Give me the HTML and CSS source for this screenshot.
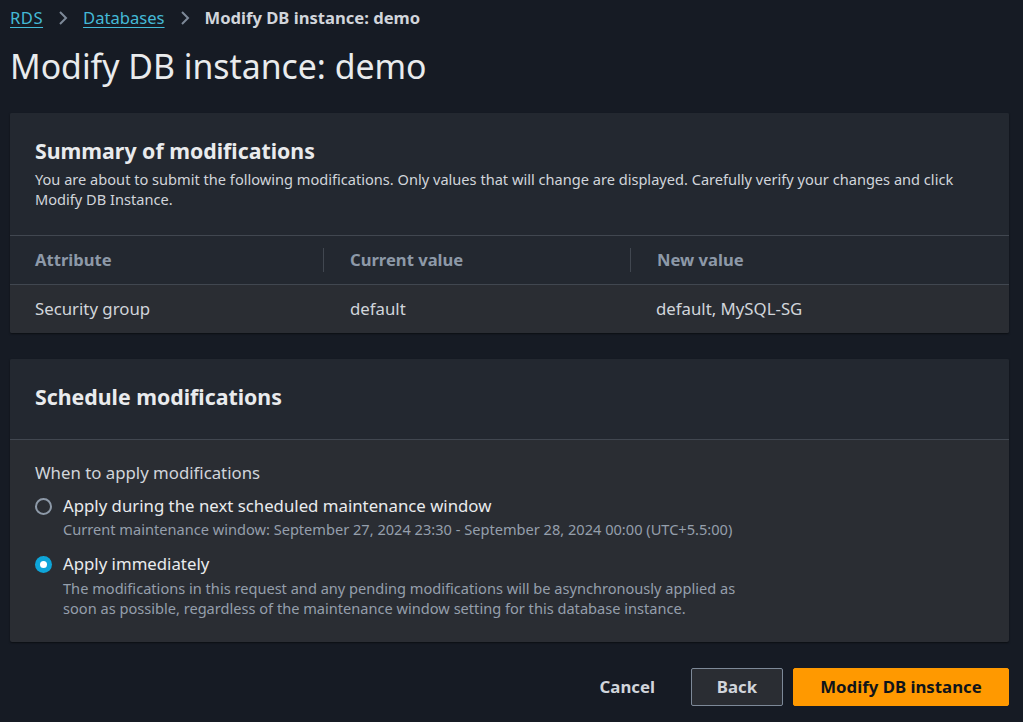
FILE: index.html
```html
<!DOCTYPE html>
<html lang="en">
<head>
<meta charset="utf-8">
<title>Modify DB instance: demo</title>
<link rel="stylesheet" href="styles.css">
</head>
<body>
<div class="page">
  <nav class="crumbs">
    <a class="crumb-link" href="#">RDS</a>
    <svg class="chev" width="10" height="16" viewBox="0 0 10 16"><path d="M2 2l6 6-6 6" fill="none" stroke="currentColor" stroke-width="2"/></svg>
    <a class="crumb-link" href="#">Databases</a>
    <svg class="chev" width="10" height="16" viewBox="0 0 10 16"><path d="M2 2l6 6-6 6" fill="none" stroke="currentColor" stroke-width="2"/></svg>
    <span class="crumb-current">Modify DB instance: demo</span>
  </nav>
  <h1 class="page-title">Modify DB instance: demo</h1>

  <section class="card">
    <div class="card-head">
      <h2 class="card-title">Summary of modifications</h2>
      <p class="card-desc">You are about to submit the following modifications. Only values that will change are displayed. Carefully verify your changes and click Modify DB Instance.</p>
    </div>
    <div class="table">
      <div class="row row-head">
        <div class="cell first">Attribute</div>
        <div class="cell sep">Current value</div>
        <div class="cell sep">New value</div>
      </div>
      <div class="row row-body">
        <div class="cell first">Security group</div>
        <div class="cell">default</div>
        <div class="cell">default, MySQL-SG</div>
      </div>
    </div>
  </section>

  <section class="card">
    <div class="card-head head-simple">
      <h2 class="card-title">Schedule modifications</h2>
    </div>
    <div class="card-body">
      <div class="field-label">When to apply modifications</div>
      <div class="radio">
        <span class="radio-dot"></span>
        <div class="radio-text">
          <div class="radio-label">Apply during the next scheduled maintenance window</div>
          <div class="radio-desc">Current maintenance window: September 27, 2024 23:30 - September 28, 2024 00:00 (UTC+5.5:00)</div>
        </div>
      </div>
      <div class="radio">
        <span class="radio-dot checked"></span>
        <div class="radio-text">
          <div class="radio-label">Apply immediately</div>
          <div class="radio-desc narrow">The modifications in this request and any pending modifications will be asynchronously applied as soon as possible, regardless of the maintenance window setting for this database instance.</div>
        </div>
      </div>
    </div>
  </section>

  <div class="actions">
    <button class="btn btn-link">Cancel</button>
    <button class="btn btn-normal">Back</button>
    <button class="btn btn-primary">Modify DB instance</button>
  </div>
</div>
</body>
</html>
```

FILE: styles.css
```css
* { box-sizing: border-box; }
html, body { margin: 0; padding: 0; }
body {
  background: #161b24;
  font-family: "Noto Sans", "Open Sans", Arial, sans-serif;
  color: #d1d5db;
  width: 1023px;
  height: 722px;
  overflow: hidden;
}
.page {
  padding: 6px 14px 0 10px;
}
.crumbs {
  display: flex;
  align-items: center;
  height: 24px;
  font-size: 16.6px;
  line-height: 24px;
}
.crumb-link {
  color: #44b9d6;
  text-decoration: underline;
  text-underline-offset: 3px;
  text-decoration-thickness: 1px;
}
.crumb-link:first-child { letter-spacing: 0.5px; }
.chev {
  color: #7d8998;
  margin: 0 15px 0 15px;
}
.crumb-current {
  font-weight: 700;
  color: #d1d5db;
}
.page-title {
  margin: 14px 0 0 0;
  font-size: 33.8px;
  line-height: 44px;
  font-weight: 400;
  color: #e9ebed;
}
.card {
  margin-top: 25px;
  background: #2a2d33;
  border-radius: 2px;
  box-shadow: 0 1px 2px rgba(0,0,0,0.5);
  overflow: hidden;
}
.card + .card { margin-top: 26px; }
.card-head {
  background: #232830;
  padding: 26px 25px 26px;
  border-bottom: 1px solid #414750;
}
.head-simple {
  padding: 26px 25px 30px;
}
.card-title {
  margin: 0;
  font-size: 21.3px;
  line-height: 24px;
  font-weight: 700;
  color: #e9ebed;
}
.card-desc {
  margin: 6px 0 0 0;
  font-size: 14.6px;
  line-height: 20px;
  color: #d1d5db;
}
.row {
  display: grid;
  grid-template-columns: 313px 307px 1fr;
  height: 48px;
  align-items: center;
}
.row-head {
  background: #232830;
  border-bottom: 1px solid #414750;
  font-weight: 700;
  color: #8d99a8;
  font-size: 16.6px;
  height: 49px;
}
.row-body {
  background: #2a2d33;
  font-size: 16.8px;
  color: #d1d5db;
}
.cell {
  padding-left: 27px;
  line-height: 24px;
}
.cell.first { padding-left: 25px; }
.cell.sep {
  border-left: 1px solid #414750;
  padding-left: 26px;
}
.row-body .cell:last-child { padding-left: 26px; }
.card-body {
  padding: 21px 25px 24px;
}
.field-label {
  font-size: 16.8px;
  line-height: 24px;
  color: #d1d5db;
  margin-bottom: 9px;
}
.radio {
  display: flex;
  align-items: flex-start;
  gap: 11px;
  margin-bottom: 13px;
}
.radio:last-child { margin-bottom: 0; }
.radio-dot {
  flex: none;
  width: 17px;
  height: 17px;
  border-radius: 50%;
  border: 2px solid #8d99a8;
  margin: 4px 0 0 0;
  position: relative;
}
.radio-dot.checked {
  border: none;
  background: #0ea5d9;
}
.radio-dot.checked::after {
  content: "";
  position: absolute;
  left: 5px;
  top: 5px;
  width: 7px;
  height: 7px;
  border-radius: 50%;
  background: #ffffff;
}
.radio-label {
  font-size: 16.8px;
  line-height: 24px;
  color: #e9ebed;
}
.radio-desc {
  font-size: 14.6px;
  line-height: 20px;
  color: #959fac;
  margin-top: 1px;
}
.radio-desc.narrow { margin-top: 2px; max-width: 690px; }
.actions {
  display: flex;
  justify-content: flex-end;
  align-items: center;
  gap: 10px;
  margin-top: 26px;
}
.btn {
  font-family: inherit;
  font-size: 16.8px;
  font-weight: 700;
  height: 38px;
  border-radius: 2px;
  cursor: pointer;
  line-height: 22px;
}
.btn-link {
  background: transparent;
  border: none;
  color: #d1d5db;
  padding: 0 20px;
  margin-right: 6px;
}
.btn-normal {
  width: 92px;
  background: #2a2d33;
  border: 1px solid #7d8998;
  color: #d1d5db;
}
.btn-primary {
  width: 216px;
  background: #ff9900;
  border: 1px solid #ff9900;
  color: #0f141a;
}
```
